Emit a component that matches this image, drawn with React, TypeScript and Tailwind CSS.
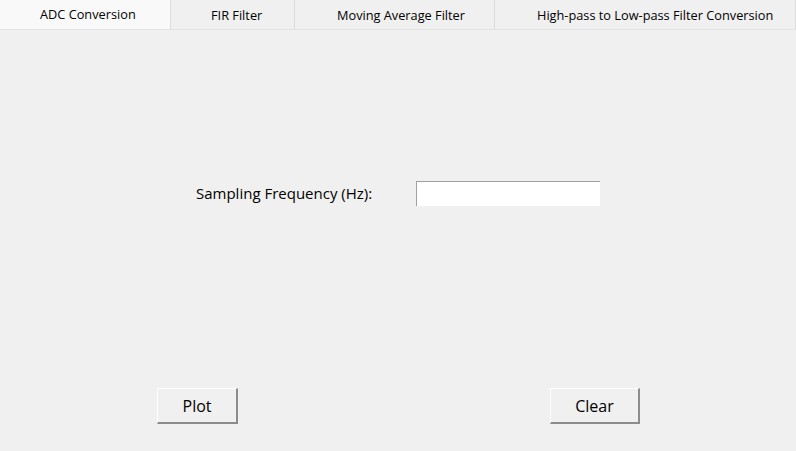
import React, { useState } from 'react';

const TABS = [
  { label: 'ADC Conversion', width: 'w-[171px] pl-[40px]' },
  { label: 'FIR Filter', width: 'w-[124px] pl-[40px]' },
  { label: 'Moving Average Filter', width: 'w-[200px] pl-[42px]' },
  { label: 'High-pass to Low-pass Filter Conversion', width: 'flex-1 pl-[42px]' },
];

export default function App() {
  const [active, setActive] = useState(0);
  const [fs, setFs] = useState('');

  return (
    <div className="w-[796px] h-[451px] bg-[#f0f0f0] flex flex-col text-black" style={{ fontFamily: '"Segoe UI", "Open Sans", sans-serif' }}>
      {/* Notebook tabs */}
      <div className="flex h-[30px] border-b border-[#e3e3e3]">
        {TABS.map((tab, i) => (
          <button
            key={tab.label}
            onClick={() => setActive(i)}
            className={`${tab.width} h-full text-left text-[12.75px] border-r border-[#dcdcdc] ${
              active === i ? 'bg-[#f9f9f9]' : 'bg-[#f0f0f0] pt-[2px]'
            }`}
          >
            {tab.label}
          </button>
        ))}
      </div>

      {/* Tab page */}
      <div className="flex-1 flex flex-col">
        <div className="flex items-center mt-[151px] h-[25px]">
          <span className="ml-[196px] w-[220px] text-[15px]">Sampling Frequency (Hz):</span>
          <input
            value={fs}
            onChange={(e) => setFs(e.target.value)}
            className="w-[184px] h-[25px] bg-white border-t border-l border-[#a0a0a0] outline-none px-1 text-[14px]"
          />
        </div>

        <div className="flex mt-[182px]">
          <button className="ml-[157px] w-[81px] h-[36px] text-[16px] bg-[#f0f0f0] border-t border-l border-white border-r-2 border-b-2 border-r-[#8c8c8c] border-b-[#8c8c8c]">
            Plot
          </button>
          <button className="ml-[312px] w-[90px] h-[36px] text-[16px] bg-[#f0f0f0] border-t border-l border-white border-r-2 border-b-2 border-r-[#8c8c8c] border-b-[#8c8c8c]">
            Clear
          </button>
        </div>
      </div>
    </div>
  );
}
